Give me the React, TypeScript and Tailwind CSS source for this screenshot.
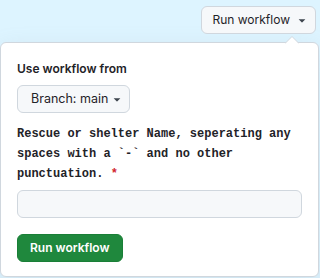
import React from "react";

const Caret = ({ className = "" }: { className?: string }) => (
  <svg viewBox="0 0 16 16" width="14" height="14" className={className} fill="currentColor">
    <path d="m4.427 7.427 3.396 3.396a.25.25 0 0 0 .354 0l3.396-3.396A.25.25 0 0 0 11.396 7H4.604a.25.25 0 0 0-.177.427Z" />
  </svg>
);

export default function App() {
  return (
    <div
      className="relative h-[278px] w-[320px] overflow-hidden bg-[#ddf4ff] text-[#1f2328]"
      style={{ fontFamily: "Inter, 'Liberation Sans', sans-serif" }}
    >
      {/* trigger */}
      <div className="flex justify-end pt-[6px] pr-[4px]">
        <button className="flex h-[28px] items-center gap-[5px] rounded-md border border-[#d0d7de] bg-[#f6f8fa] pl-[10px] pr-[6px] text-[12px] text-[#1f2328]">
          Run workflow
          <Caret className="text-[#3d444d]" />
        </button>
      </div>

      {/* popover caret */}
      <svg className="absolute left-[285px] top-[36px]" width="14" height="8" viewBox="0 0 14 8">
        <path d="M0 7.5 L7 0.5 L14 7.5 Z" fill="white" />
        <path d="M0 7.5 L7 0.5 L14 7.5" fill="none" stroke="#d0d7de" strokeWidth="1" />
      </svg>

      {/* panel */}
      <div className="mt-[8px] w-[319px] rounded-md border border-[#d0d7de] bg-white px-4 pt-4 pb-[14px] shadow-[0_8px_24px_rgba(140,149,159,0.2)]">
        <p className="text-[12px] font-semibold leading-5">Use workflow from</p>

        <button className="mt-[6px] flex h-[28px] items-center gap-[2px] rounded-md border border-[#d0d7de] bg-[#f6f8fa] pl-[13px] pr-[5px] text-[12.5px]">
          Branch: main
          <Caret className="text-[#3d444d]" />
        </button>

        <p
          className="mt-[11px] text-[12px] font-bold leading-5"
          style={{ fontFamily: "'Liberation Mono', 'DejaVu Sans Mono', monospace" }}
        >
          Rescue or shelter Name, seperating any spaces with a `-` and no other punctuation.{" "}
          <span className="text-[#d1242f]">*</span>
        </p>

        <input
          type="text"
          className="mt-[6px] block h-[28px] w-full rounded-md border border-[#d0d7de] bg-[#f6f8fa] px-2 text-[12px] focus:outline-none"
        />

        <button className="mt-4 flex h-[28px] items-center rounded-md border border-[#1a7f37] bg-[#1f883d] px-[12px] text-[12px] font-semibold text-white">
          Run workflow
        </button>
      </div>
    </div>
  );
}
